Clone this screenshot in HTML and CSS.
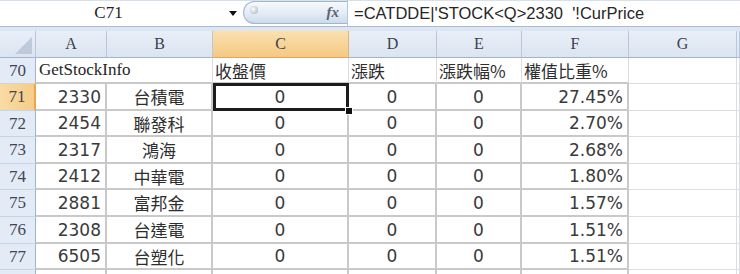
FILE: index.html
```html
<!DOCTYPE html>
<html>
<head>
<meta charset="utf-8">
<link rel="stylesheet" href="styles.css">
</head>
<body>
<div class="app">
  <div class="formula-bar">
    <div class="namebox"><span class="name">C71</span><span class="dd"></span></div>
    <div class="fx-pill"><span class="bead"></span><span class="fx">fx</span></div>
    <div class="formula">=CATDDE|'STOCK&lt;Q&gt;2330  '!CurPrice</div>
  </div>
  <div class="gap"></div>
  <div class="sheet">
    <div class="ch corner"><span class="tri"></span></div>
    <div class="ch">A</div><div class="ch">B</div><div class="ch selc">C</div><div class="ch">D</div><div class="ch">E</div><div class="ch">F</div><div class="ch">G</div><div class="ch"></div>

    <div class="rh">70</div>
    <div class="cell hd ov">GetStockInfo</div><div class="cell hd"></div><div class="cell hd cjk l">收盤價</div><div class="cell hd cjk l">漲跌</div><div class="cell hd cjk l">漲跌幅%</div><div class="cell hd cjk l">權值比重%</div><div class="cell g"></div><div class="cell g"></div>

    <div class="rh selr">71</div>
    <div class="cell d num r">2330</div><div class="cell d cjk c">台積電</div><div class="cell d num c active">0<span class="selbox"></span><span class="handle"></span></div><div class="cell d num c">0</div><div class="cell d num c">0</div><div class="cell d num r">27.45%</div><div class="cell g"></div><div class="cell g"></div>

    <div class="rh">72</div>
    <div class="cell d num r">2454</div><div class="cell d cjk c">聯發科</div><div class="cell d num c">0</div><div class="cell d num c">0</div><div class="cell d num c">0</div><div class="cell d num r">2.70%</div><div class="cell g"></div><div class="cell g"></div>

    <div class="rh">73</div>
    <div class="cell d num r">2317</div><div class="cell d cjk c">鴻海</div><div class="cell d num c">0</div><div class="cell d num c">0</div><div class="cell d num c">0</div><div class="cell d num r">2.68%</div><div class="cell g"></div><div class="cell g"></div>

    <div class="rh">74</div>
    <div class="cell d num r">2412</div><div class="cell d cjk c">中華電</div><div class="cell d num c">0</div><div class="cell d num c">0</div><div class="cell d num c">0</div><div class="cell d num r">1.80%</div><div class="cell g"></div><div class="cell g"></div>

    <div class="rh">75</div>
    <div class="cell d num r">2881</div><div class="cell d cjk c">富邦金</div><div class="cell d num c">0</div><div class="cell d num c">0</div><div class="cell d num c">0</div><div class="cell d num r">1.57%</div><div class="cell g"></div><div class="cell g"></div>

    <div class="rh">76</div>
    <div class="cell d num r">2308</div><div class="cell d cjk c">台達電</div><div class="cell d num c">0</div><div class="cell d num c">0</div><div class="cell d num c">0</div><div class="cell d num r">1.51%</div><div class="cell g"></div><div class="cell g"></div>

    <div class="rh">77</div>
    <div class="cell d num r">6505</div><div class="cell d cjk c">台塑化</div><div class="cell d num c">0</div><div class="cell d num c">0</div><div class="cell d num c">0</div><div class="cell d num r">1.51%</div><div class="cell g"></div><div class="cell g"></div>

    <div class="rh">78</div>
    <div class="cell d num r">2882</div><div class="cell d cjk c">國泰金</div><div class="cell d num c">0</div><div class="cell d num c">0</div><div class="cell d num c">0</div><div class="cell d num r">1.48%</div><div class="cell g"></div><div class="cell g"></div>
  </div>
</div>
</body>
</html>
```
FILE: styles.css
```css
html, body {
  margin: 0;
  padding: 0;
  background: #ffffff;
}
.app {
  width: 740px;
  height: 274px;
  overflow: hidden;
  font-family: "Liberation Serif", serif;
  color: #262626;
}
.formula-bar {
  display: flex;
  height: 26px;
  border-bottom: 1px solid #a9bbd3;
  background: #ffffff;
  box-shadow: inset 0 1px 0 #d6e1ee;
}
.namebox {
  width: 243px;
  display: flex;
  align-items: center;
}
.name {
  width: 217px;
  text-align: center;
  font-size: 17px;
  color: #222;
}
.dd {
  margin-left: 12px;
  width: 0;
  height: 0;
  border-left: 4px solid transparent;
  border-right: 4px solid transparent;
  border-top: 5px solid #111;
}
.fx-pill {
  width: 104px;
  height: 23px;
  margin-top: 1px;
  box-sizing: border-box;
  border: 1px solid #a3b6cf;
  border-right: none;
  border-radius: 12px 0 0 12px;
  background: linear-gradient(#f7f9fc, #e3ebf5 55%, #cddbec);
  display: flex;
  align-items: center;
  justify-content: space-between;
  padding: 0 8px 0 6px;
}
.bead {
  width: 8px;
  height: 8px;
  border-radius: 50%;
  margin-top: -6px;
  background: radial-gradient(circle at 40% 40%, #ffffff, #c5ccd6 60%, #9aa6b5);
}
.fx {
  font-family: "Liberation Serif", serif;
  font-style: italic;
  font-weight: bold;
  font-size: 15px;
  color: #5c6470;
}
.formula {
  flex: 1;
  border-left: 1px solid #b6c6da;
  padding-left: 6px;
  font-family: "Liberation Sans", sans-serif;
  font-size: 16.5px;
  line-height: 26px;
  white-space: pre;
  color: #262626;
}
.gap {
  height: 4px;
  background: #dce6f2;
}
.sheet {
  display: grid;
  grid-template-columns: 36px 71px 106px 136px 88px 85px 107px 108px 1fr;
  grid-template-rows: 27px 26px 27px 26px 27px 26px 27px 27px 26px 27px;
}
.ch {
  box-sizing: border-box;
  background: linear-gradient(#e9eff8, #dbe4f1);
  border-right: 1px solid #b8c8dc;
  border-bottom: 1px solid #9eb4cf;
  display: flex;
  align-items: center;
  justify-content: center;
  font-size: 16px;
  color: #3a414c;
}
.ch.selc {
  background: linear-gradient(#fae0b0, #f5c983);
  border-bottom: 1px solid #eea448;
  border-right-color: #e9b36a;
}
.corner {
  position: relative;
}
.tri {
  position: absolute;
  right: 3px;
  bottom: 3px;
  width: 0;
  height: 0;
  border-left: 17px solid transparent;
  border-bottom: 17px solid #bccadc;
}
.rh {
  box-sizing: border-box;
  background: #e3ebf6;
  border-right: 1px solid #9eb4cf;
  border-bottom: 1px solid #c6d4e5;
  display: flex;
  align-items: center;
  justify-content: center;
  font-size: 17px;
  color: #3e4654;
}
.rh.selr {
  background: linear-gradient(90deg, #f9dba5, #f6cc88);
  border-right: 2px solid #eea448;
}
.cell {
  box-sizing: border-box;
  display: flex;
  align-items: center;
  white-space: nowrap;
  border-right: 1px solid #dadde2;
  border-bottom: 1px solid #dadde2;
  min-width: 0;
}
.cell.hd {
  border-bottom: 2px solid #c9c9c9;
  font-size: 17px;
}
.cell.ov {
  border-right: none;
  overflow: visible;
  padding-left: 3px;
  position: relative;
  z-index: 1;
}
.cell.d {
  border-right: 2px solid #c9c9c9;
  border-bottom: 2px solid #c9c9c9;
}
.num {
  font-family: "DejaVu Sans", sans-serif;
  font-size: 17px;
  color: #3a3a3a;
}
.cjk {
  font-family: "Noto Sans CJK TC", sans-serif;
  font-size: 17px;
  color: #2e2e2e;
}
.r {
  justify-content: flex-end;
  padding-right: 4px;
}
.c {
  justify-content: center;
}
.l {
  justify-content: flex-start;
  padding-left: 2px;
}
.active {
  position: relative;
}
.selbox {
  position: absolute;
  left: 0;
  top: -1px;
  right: -2px;
  bottom: -2px;
  border: 3px solid #1c1c1c;
}
.handle {
  position: absolute;
  right: -6px;
  bottom: -6px;
  width: 6px;
  height: 6px;
  background: #111;
  border: 1px solid #fff;
  z-index: 2;
}
```
